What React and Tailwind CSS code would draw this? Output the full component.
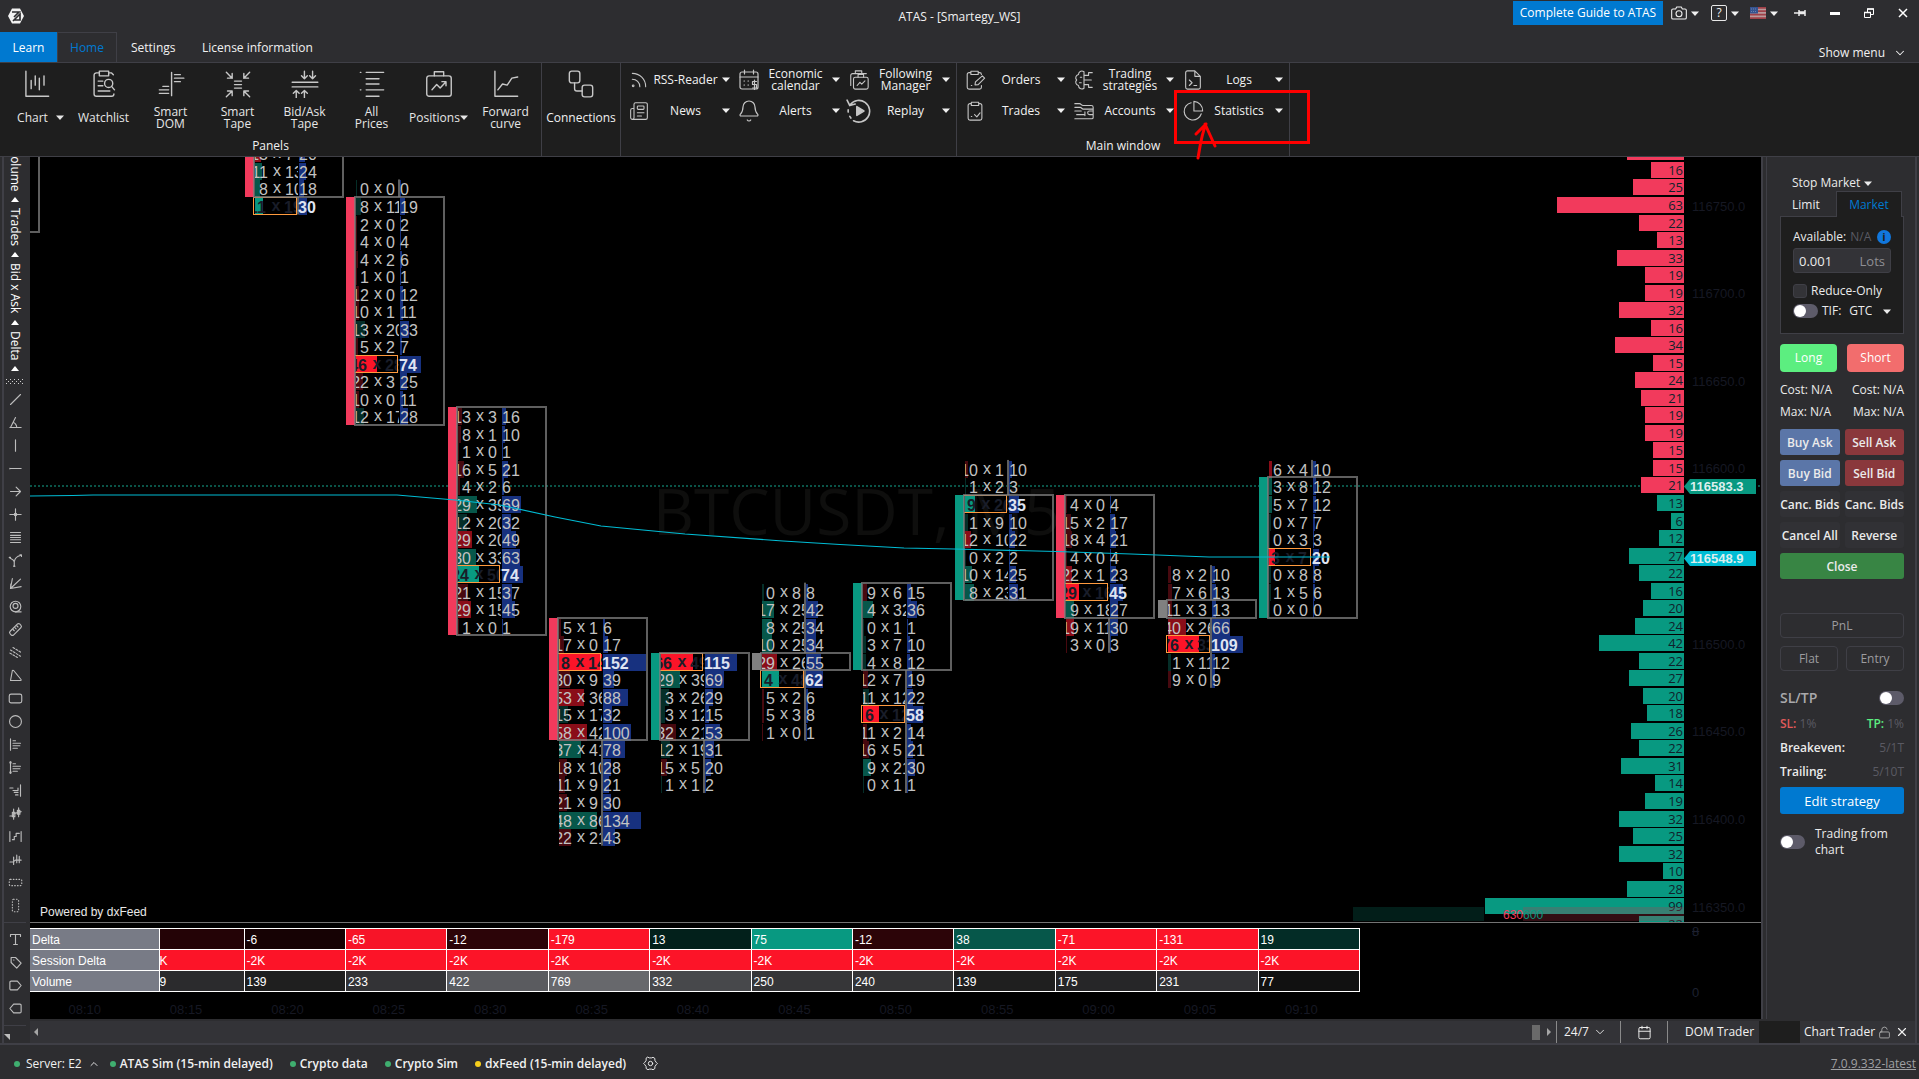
import React, { useState } from 'react';
import { Bell, Calendar, ChevronDown, ChevronUp, LockOpen, Newspaper, Rss, X } from 'lucide-react';

const Svg = ({ size = 24, sw = 1.2, className = '', children }) => (
  <svg width={size} height={size} viewBox="0 0 24 24" fill="none" stroke="currentColor" strokeWidth={sw} strokeLinecap="round" strokeLinejoin="round" className={`shrink-0 ${className}`}>
    {children}
  </svg>
);

const Caret = ({ className = '' }) => (
  <svg width="8" height="5" viewBox="0 0 8 5" fill="currentColor" className={`shrink-0 ${className}`}>
    <path d="M0 0.5H8L4 5Z" />
  </svg>
);

const clip = <path d="M8 4H6.5A2 2 0 0 0 4.500 6V20A2 2 0 0 0 6.500 22H17.500A2 2 0 0 0 19.500 20V6A2 2 0 0 0 17.500 4H16M8 2.500H16V6H8Z" />;

const panelTools = [
  { label: ['Chart'], caret: true, icon: <path d="M2.500 1V22.500H22M7 9V16M10.500 5V13M14 7V17M18 5V13" /> },
  { label: ['Watchlist'], icon: <><path d="M8 2.500H5.500A2 2 0 0 0 3.500 4.500V20.500A2 2 0 0 0 5.500 22.500H18.500A2 2 0 0 0 20.500 20.500M16 2.500H18.500L20 4M8 1H16V5H8ZM7 9.500H11M7 13.500H11M7 18H17" /><circle cx="16" cy="11.500" r="3.500" /><path d="M18.500 14L21 17" /></> },
  { label: ['Smart', 'DOM'], icon: <path d="M12.500 2V22M15 4H20M15 7H23M15 10H20M5 14H10M2 17H10M2 20H10" /> },
  { label: ['Smart', 'Tape'], icon: <path d="M2 2L7 7M7 3V7H3M22 2L17 7M17 3V7H21M2 23L7 18M3 18H7V22M22 23L17 18M21 18H17V22M9 9.500H15M9 12.500H15M9 15.500H15" /> },
  { label: ['Bid/Ask', 'Tape'], icon: <path d="M1 10.500H23M1 14.500H23M11.500 1V7.500M9 5L11.500 7.500L14 5M18.500 1V7.500M16 5L18.500 7.500L21 5M4.500 24V17.500M2 20L4.500 17.500L7 20M11.500 24V17.500M9 20L11.500 17.500L14 20" /> },
  { label: ['All', 'Prices'], icon: <path d="M2 2H2.500M7 2H22M7 7.500H18M7 12H18M2 17H2.500M7 17H22M7 22.500H18" /> },
  { label: ['Positions'], caret: true, tight: true, icon: <><rect x="1.500" y="5" width="21" height="17.500" rx="2" /><path d="M8 5V1.500H16V5M6 17L10 12.500L13 15.500L18 10M14.500 10H18V13.500" /></> },
  { label: ['Forward', 'curve'], icon: <path d="M2.500 1V22.500H22M5 17L9 12L13 13L17 7L22 6" /> },
];

const calendarIcon = <><rect x="3" y="4" width="18" height="17" rx="2" /><path d="M3 9H21M7.500 2V6M16.500 2V6M7 13H7.500M11 13H11.500M7 17H7.500M11 17H11.500" /><path d="M19.500 13.500H15.500V16.500H19.500V20H15.500M17.500 12V21.500" /></>;
const followIcon = <><rect x="6" y="9" width="16" height="13" rx="2" /><path d="M11 9V6H17V9M3 18V7A2 2 0 0 1 5 5H20M8 5V2H15V5M10 18L13 14.500L15 16.500L18.500 13" /></>;
const replayIcon = <><path d="M4 6A10 10 0 1 1 7 21M1 2L3.500 7L8.500 5.500M2 11V13M3.500 17L4.500 18.500" /><path d="M10 8L16.500 12L10 16Z" fill="currentColor" /></>;

const groupA = [
  { label: ['RSS-Reader'], icon: <Rss size={22} strokeWidth={1.3} /> },
  { label: ['Economic', 'calendar'], icon: <Svg size={24}>{calendarIcon}</Svg> },
  { label: ['Following', 'Manager'], icon: <Svg size={22}>{followIcon}</Svg> },
  { label: ['News'], icon: <Newspaper size={24} strokeWidth={1.3} className="-scale-x-100 rotate-180 -scale-y-100" /> },
  { label: ['Alerts'], icon: <Bell size={24} strokeWidth={1.2} className="shrink-0" /> },
  { label: ['Replay'], icon: <Svg size={26} sw={1.5}>{replayIcon}</Svg> },
];

const groupB = [
  { label: ['Orders'], icon: <Svg size={22}><path d="M7.500 4H5.500A2 2 0 0 0 3.500 6V20A2 2 0 0 0 5.500 22H17A2 2 0 0 0 19 20V18M15.500 4H17A2 2 0 0 1 19 6M7.500 2.500H15.500V6H7.500ZM8 18H8.500" /><path d="M12 17.500L12.500 14L20 7.500L22.500 10L15.500 17Z" /></Svg> },
  { label: ['Trading', 'strategies'], icon: <Svg size={22}><path d="M12 3C9 1 6 3 6 6C3 7 2 10 4 12C2 14 3 17 6 18C6 21 9 23 12 21M12 3V21M12 7H17V4H21M12 12H20M12 17H17V20H21M8 9H9.500M7 15H9" /></Svg> },
  { label: ['Logs'], icon: <Svg size={22}><path d="M14 2H6A2 2 0 0 0 4 4V20A2 2 0 0 0 6 22H18A2 2 0 0 0 20 20V8ZM14 2V8H20M8 12L11 15L8 18M13 18H16" /></Svg> },
  { label: ['Trades'], icon: <Svg size={22}>{clip}<path d="M8 18H8.500M11.500 16L14 18.500L17.500 14" /></Svg> },
  { label: ['Accounts'], icon: <Svg size={22}><path d="M2 4H7C9 4 9 6 11 6H20A2 2 0 0 1 22 8V19A1.500 1.500 0 0 1 20.500 20.500H2M2 8H8C9 8 10 10 11 10H22M2 12H9M4 16H12M22 12H18A2 2 0 0 0 18 16H22M13 13V17" /></Svg> },
  { label: ['Statistics'], marked: true, icon: <Svg size={22}><path d="M10 3A9.500 9.500 0 1 0 21 15M13 1.500V12H22.500A10 10 0 0 0 13 1.500Z" /></Svg> },
];

// short vertical strip of drawing tools
const drawTools = [
  ['Line', <path d="M4 20L20 4" />],
  ['Angle', <path d="M3 20H21M4 20L12 4M8 12C11 12 14 16 14 20" />],
  ['Vertical line', <path d="M12 3V21" />],
  ['Horizontal line', <path d="M3 12H21M3 11.500V12.500" />],
  ['Arrow', <path d="M4 12H20M13 5L20 12L13 19" />],
  ['Cross', <><path d="M12 3V21M3 12H21" /><circle cx="12" cy="12" r="2" fill="currentColor" /></>],
  ['Fibonacci', <path d="M4 4H20M4 8.500H20M4 12H20M4 15.500H20M4 20H20" />],
  ['Pitchfork', <><path d="M3 8L8 11L10 14V21M10 14C11 9 14 5 20 4" /><path d="M19 3H21.500V5.500M2 7H4M9 21H11" /></>],
  ['Fan', <path d="M4 20L7 4M4 20L20 5M4 20L21 17M4 20L4.500 13" />],
  ['Spiral', <><circle cx="12" cy="12" r="8.500" /><circle cx="12" cy="11" r="4" /><path d="M12 20.500H21" /></>],
  ['Ruler', <><rect x="8" y="1" width="8" height="22" rx="3" transform="rotate(45 12 12)" /><path d="M8 12L10 14M11 9L13 11M14 6L16 8" /></>],
  ['Channel', <path d="M8 4L21 12M4 8L20 18M3 13L15 20" strokeDasharray="3 2.500" />],
  ['Triangle', <path d="M7 4L4 20H20Q22 20 20.500 18L9 4Q7.500 3 7 4Z" />],
  ['Rectangle', <rect x="2" y="5" width="20" height="14" rx="3" />],
  ['Ellipse', <circle cx="12" cy="12" r="9.500" />],
  ['Profile', <path d="M4 3V21M8 6H12M8 10H20M8 14H19M8 18H15" />],
  ['Anchored profile', <><path d="M4 3V21M8 6H12M8 10H20M8 14H19M8 18H15" /><circle cx="4" cy="4" r="1" /><circle cx="4" cy="20" r="1" /></>],
  ['Right profile', <path d="M20 3V21M3 8H8M8 12H16M10 15H16M12 19H16M16 8V12" />],
  ['Candles', <><path d="M3 16H8L10 12L21 9M9 5V21M17 3V17" /><rect x="7" y="10" width="4" height="7" /><rect x="15" y="7" width="4" height="6" /></>],
  ['Range', <path d="M3 4V20M21 4V20M7 17H10V12H13V7H18" />],
  ['Bars', <path d="M3 16H8L12 13H21M9 8V20M14 5V17M18 7V17" />],
  ['Horizontal range', <rect x="2" y="7" width="20" height="10" rx="2" strokeDasharray="1 3.500" />],
  ['Vertical range', <rect x="7" y="2" width="10" height="20" rx="2" strokeDasharray="1 3.500" />],
];

const noteTools = [
  ['Text', <path d="M4 7V4H20V7M12 4V20M9 20H15" />],
  ['Label', <><path d="M5 4H12L21 13L14 21L5 12Z" /><path d="M9 8H9.500" /></>],
  ['Tag right', <path d="M5 5H15L21 12L15 19H5A2 2 0 0 1 3 17V7A2 2 0 0 1 5 5Z" />],
  ['Tag left', <path d="M19 5H9L3 12L9 19H19A2 2 0 0 0 21 17V7A2 2 0 0 0 19 5Z" />],
];

const PITCH = 17.53;
const STEP = 101.4;
const GREEN = '#089981';
const RED = '#f23a5c';
const rowTop = (r) => 40 + r * PITCH;

const shades = { G: '#089981', g: '#06574a', t: '#052e28', R: '#fc1428', r: '#8a0d18', d: '#47090f' };

// rows: bid, ask, volume, shade; body holds first and last row of the candle
const candles = [
  { from: -3, body: [-12, -1], color: RED, rows: [[13, 7, 20, 'r'], [11, 13, 24, 'g'], [8, 10, 18, 'g'], [11, 19, 30, 'G']] },
  { from: -1, body: [0, 12], color: RED, rows: [[0, 0, 0, 't'], [8, 11, 19, 't'], [2, 0, 2, 'd'], [4, 0, 4, 'd'], [4, 2, 6, 'd'], [1, 0, 1, 'd'], [12, 0, 12, 'd'], [10, 1, 11, 'd'], [13, 20, 33, 't'], [5, 2, 7, 'd'], [46, 28, 74, 'R'], [22, 3, 25, 'd'], [10, 0, 11, 'd'], [12, 17, 28, 't']] },
  { from: 12, body: [12, 24], color: RED, rows: [[13, 3, 16, 'd'], [8, 1, 10, 'd'], [1, 0, 1, 'd'], [16, 5, 21, 'd'], [4, 2, 6, 'd'], [29, 39, 69, 'g'], [12, 20, 32, 't'], [29, 20, 49, 'r'], [30, 33, 63, 'g'], [24, 50, 74, 'G'], [21, 15, 37, 'd'], [29, 15, 45, 'r'], [1, 0, 1, 'd']] },
  { from: 24, body: [24, 30], color: RED, rows: [[5, 1, 6, 'd'], [17, 0, 17, 'd'], [8, 144, 152, 'R'], [30, 9, 39, 'd'], [53, 36, 88, 'r'], [15, 17, 32, 't'], [58, 42, 100, 'r'], [37, 41, 78, 'g'], [18, 10, 28, 'd'], [11, 9, 21, 'd'], [21, 9, 30, 'd'], [48, 86, 134, 'g'], [22, 21, 43, 'd']] },
  { from: 26, body: [26, 30], color: GREEN, rows: [[66, 49, 115, 'R'], [29, 39, 69, 'g'], [3, 26, 29, 't'], [3, 12, 15, 't'], [32, 21, 53, 'd'], [12, 19, 31, 't'], [15, 5, 20, 'd'], [1, 1, 2, 't']] },
  { from: 22, body: [26, 26], color: '#808080', rows: [[0, 8, 8, 't'], [17, 25, 42, 'g'], [8, 25, 34, 'g'], [10, 25, 34, 'g'], [29, 26, 55, 'r'], [4, 48, 62, 'G'], [5, 2, 6, 'd'], [5, 3, 8, 'd'], [1, 0, 1, 'd']] },
  { from: 22, body: [22, 26], color: GREEN, rows: [[9, 6, 15, 'd'], [4, 32, 36, 'g'], [0, 1, 1, 't'], [3, 7, 10, 't'], [4, 8, 12, 't'], [12, 7, 19, 'd'], [11, 12, 22, 't'], [6, 12, 58, 'R'], [11, 2, 14, 'd'], [16, 5, 21, 'd'], [9, 21, 30, 'g'], [0, 1, 1, 't']] },
  { from: 15, body: [17, 22], color: GREEN, rows: [[10, 1, 10, 'd'], [1, 2, 3, 't'], [9, 26, 35, 'G'], [1, 9, 10, 't'], [12, 10, 22, 'r'], [0, 2, 2, 't'], [10, 14, 25, 'g'], [8, 23, 31, 'g']] },
  { from: 17, body: [17, 23], color: RED, rows: [[4, 0, 4, 'd'], [15, 2, 17, 'd'], [18, 4, 21, 'd'], [4, 0, 4, 'd'], [22, 1, 23, 'r'], [29, 16, 45, 'R'], [9, 18, 27, 'g'], [19, 11, 30, 'r'], [3, 0, 3, 'd']] },
  { from: 21, body: [23, 23], color: '#808080', rows: [[8, 2, 10, 'd'], [7, 6, 13, 'd'], [11, 3, 13, 'd'], [40, 26, 66, 'r'], [76, 33, 109, 'R'], [1, 11, 12, 't'], [9, 0, 9, 'd']] },
  { from: 15, body: [16, 23], color: GREEN, rows: [[6, 4, 10, 'r'], [3, 8, 12, 'g'], [5, 7, 12, 'g'], [0, 7, 7, 't'], [0, 3, 3, 't'], [3, 7, 20, 'R'], [0, 8, 8, 't'], [1, 5, 6, 't'], [0, 0, 0, 't']] },
];

const profile = [28, 16, 25, 63, 22, 13, 33, 19, 19, 32, 16, 34, 15, 24, 21, 19, 19, 15, 15, 21, 13, 6, 12, 27, 22, 16, 20, 24, 42, 22, 27, 20, 18, 26, 22, 31, 14, 19, 32, 25, 32, 10, 28, 99, 22];
const FIRST_ROW = -3;
const LAST_RED = 16;

const Candle = ({ candle, index }) => {
  const x = Math.round(225 + index * STEP);
  const [b0, b1] = candle.body;
  const last = candle.from + candle.rows.length - 1;
  const top = Math.round(rowTop(b0));
  const bottom = Math.round(rowTop(b1 + 1));
  return (
    <g fontFamily="Liberation Sans, Arial, sans-serif" fontSize="16">
      {candle.rows.map(([bid, ask, vol, shade], i) => {
        const y = Math.round(rowTop(candle.from + i));
        const poc = shade === 'G' || shade === 'R';
        const w = Math.max(1, Math.round(vol * 0.28));
        const dark = poc ? '#191d29' : '#c3c3c3';
        const off = poc ? 2 : 0;
        return (
          <g key={i}>
            <rect x={x} y={y + 1} width={w} height="17" fill={shades[shade]} />
            <rect x={x + 44} y={y + 1} width={w} height="17" fill="#17317f" />
            <svg x={x} y={y} width="43" height="20" overflow="hidden" fill={dark} fontWeight={poc ? 700 : 400}>
              <text x={13 - off} y="16" textAnchor="end">{bid}</text>
              <text x={22 - off / 2} y="14" textAnchor="middle">x</text>
              <text x={30 - off / 2} y="16">{ask}</text>
            </svg>
            {poc && <rect x={x - 1.5} y={y + 0.5} width="43" height="17" fill="none" stroke="#ff9a3e" />}
          </g>
        );
      })}
      {candle.from < b0 && <rect x={x + 42} y={rowTop(candle.from)} width="2" height={top - rowTop(candle.from)} fill="#5f5f5f" />}
      {last > b1 && <rect x={x + 42} y={bottom} width="2" height={rowTop(last + 1) - bottom} fill="#5f5f5f" />}
      <rect x={x - 10} y={top} width="9" height={bottom - top} fill={candle.color} />
      <rect x={x - 1} y={top} width="89" height={bottom - top} fill="none" stroke="#7f7f7f" strokeOpacity="0.75" strokeWidth="2" />
      {candle.rows.map(([, , vol, shade], i) => {
        const poc = shade === 'G' || shade === 'R';
        return (
          <text key={i} x={x + (poc ? 43 : 44)} y={Math.round(rowTop(candle.from + i)) + 16} fill={poc ? '#dfe4f2' : '#c3c3c3'} fontWeight={poc ? 700 : 400}>{vol}</text>
        );
      })}
    </g>
  );
};

const PriceTag = ({ y, color, text }) => (
  <g transform={`translate(0 ${y})`}>
    <path d="M0 0L6 -7.500H72V7.500H6Z" fill={color} />
    <text x="6" y="4" fontSize="13" fontWeight="700" fill="#dcefee">{text}</text>
  </g>
);

const PriceChart = () => (
  <svg className="block h-full w-full bg-black">
    <svg x="-39" width="100%" overflow="visible">
      <text x="50%" y="378" textAnchor="middle" fontSize="64" fill="#0e0e0d" fontFamily="Open Sans, Noto Sans, sans-serif">BTCUSDT, M5</text>
    </svg>
    <path d="M0 75H9V-2" fill="none" stroke="#5f5f5f" strokeWidth="2" />
    <line x1="0" x2="100%" y1="329" y2="329" stroke="#0a5448" strokeWidth="2" strokeDasharray="2 2" />
    {candles.map((c, i) => <Candle key={i} candle={c} index={i} />)}
    <polyline points="0,339 43,338.500 63,338 367,338 425,343 470,348 525,360 571,369 655,377 753,384 810,387.500 874,391 924,392 1026,394.500 1101,397 1179,400 1300,400" fill="none" stroke="#00bcd4" strokeWidth="1.200" />
    <text x="10" y="759" fill="#e8e8e8" fontSize="12" fontFamily="Liberation Sans, sans-serif">Powered by dxFeed</text>
    <svg x="100%" overflow="visible">
      <g transform="translate(-77 0)">
        <rect x="-331" y="750" width="131" height="14" fill="#021e19" />
        {profile.map((n, i) => {
          const r = FIRST_ROW + i;
          const y = Math.round(rowTop(r));
          const w = n * 2 + 1;
          return (
            <g key={i}>
              <rect x={-w} y={y} width={w} height="16" fill={r <= LAST_RED ? RED : GREEN} />
              <text x="-1" y={y + 13} textAnchor="end" fontSize="13" fill="#10222c" fontFamily="Open Sans, Noto Sans, sans-serif">{n}</text>
            </g>
          );
        })}
        <rect x="-161" y="750" width="161" height="14" fill="#c8324a" fillOpacity="0.25" />
        <text x="-181" y="762" fontSize="12" fill="#f23a5c" fontFamily="Liberation Sans, sans-serif">630<tspan fill={GREEN}>600</tspan></text>
        <g fontFamily="Liberation Sans, sans-serif">
          {[750, 700, 650, 600, 500, 450, 400, 350].map((p) => (
            <text key={p} x="8" y={Math.round(48.5 + ((750 - p) / 10) * PITCH) + 5} fontSize="13" fill="#161823">{`116${p}.0`}</text>
          ))}
          <PriceTag y={329.5} color={GREEN} text="116583.3" />
          <PriceTag y={401.5} color="#00bcd4" text="116548.9" />
        </g>
      </g>
    </svg>
  </svg>
);

const stats = [
  { delta: '', session: 'K', volume: '9', dc: '#240306', vc: '#2b2b2d' },
  { delta: '-6', session: '-2K', volume: '139', dc: '#160204', vc: '#1f1f1f' },
  { delta: '-65', session: '-2K', volume: '233', dc: '#f71428', vc: '#333336' },
  { delta: '-12', session: '-2K', volume: '422', dc: '#2c0408', vc: '#5a5b5f' },
  { delta: '-179', session: '-2K', volume: '769', dc: '#fc1428', vc: '#67686c' },
  { delta: '13', session: '-2K', volume: '332', dc: '#02201b', vc: '#47484b' },
  { delta: '75', session: '-2K', volume: '250', dc: '#089981', vc: '#363638' },
  { delta: '-12', session: '-2K', volume: '240', dc: '#2c0408', vc: '#343436' },
  { delta: '38', session: '-2K', volume: '139', dc: '#06574a', vc: '#1f1f1f' },
  { delta: '-71', session: '-2K', volume: '175', dc: '#fc1428', vc: '#262628' },
  { delta: '-131', session: '-2K', volume: '231', dc: '#fc1428', vc: '#323235' },
  { delta: '19', session: '-2K', volume: '77', dc: '#032c26', vc: '#111111' },
];

const times = ['08:10', '08:15', '08:20', '08:25', '08:30', '08:35', '08:40', '08:45', '08:50', '08:55', '09:00', '09:05', '09:10'];

const statRows = [
  { name: 'Delta', key: 'delta', color: (s) => s.dc },
  { name: 'Session Delta', key: 'session', color: () => '#fc1428' },
  { name: 'Volume', key: 'volume', color: (s) => s.vc },
];

const StatsTable = () => (
  <table className="w-[1330px] table-fixed border-collapse text-left text-[12px] leading-4 text-white">
    <colgroup>
      <col className="w-[129px]" />
      <col className="w-[85px]" />
    </colgroup>
    <tbody>
      {statRows.map((row) => (
        <tr key={row.name} className="h-[21px]">
          <th scope="row" className="border-y border-white bg-[#787b86] px-[2px] pt-px font-normal">{row.name}</th>
          {stats.map((s, i) => (
            <td key={i} className={`border border-white pt-px ${i ? 'px-[2px]' : ''}`} style={{ backgroundColor: row.color(s) }}>{s[row.key]}</td>
          ))}
        </tr>
      ))}
    </tbody>
  </table>
);

const Toggle = ({ id, label }) => {
  const [on, setOn] = useState(false);
  return (
    <span className="relative inline-flex h-[14px] w-[25px] shrink-0">
      <input id={id} type="checkbox" role="switch" aria-label={label} checked={on} onChange={() => setOn(!on)} className="peer h-full w-full cursor-pointer appearance-none rounded-full bg-[#5d5b69] checked:bg-[#0079d0]" />
      <span className="pointer-events-none absolute top-px left-px h-3 w-3 rounded-full bg-white peer-checked:left-3" />
    </span>
  );
};

const TitleBar = () => (
  <header className="relative flex h-8 shrink-0 items-start justify-between text-[12px]">
    <svg width="16" height="16" viewBox="0 0 16 16" className="mt-2 ml-2">
      <path d="M4 0.500H12L16 8L12 15.500H4L0 8Z" fill="#f2f2f2" />
      <path d="M4 4H11L6 9M5.500 12H12V6L5 13" fill="none" stroke="#2d2d30" strokeWidth="1.700" />
    </svg>
    <h1 className="absolute inset-x-0 top-2 text-center leading-[18px]">ATAS - [Smartegy_WS]</h1>
    <div className="relative flex h-[26px] items-center pr-[11px]">
      <a href="#guide" className="mr-2 flex h-6 w-[150px] items-center justify-center bg-[#0079d0] text-[12px] text-white">Complete Guide to ATAS</a>
      <button type="button" aria-label="Screenshot" className="mr-3 flex items-center gap-1">
        <Svg size={16} sw={1.6}><path d="M3 6H7L8.500 3H15.500L17 6H21A2 2 0 0 1 23 8V19A2 2 0 0 1 21 21H3A2 2 0 0 1 1 19V8A2 2 0 0 1 3 6Z" /><circle cx="12" cy="13" r="4.500" /></Svg>
        <Caret />
      </button>
      <button type="button" aria-label="Help" className="mr-[11px] flex items-center gap-1">
        <span className="flex h-4 w-4 items-center justify-center rounded-[2px] border border-[#e8e8e8] text-[12px] leading-3">?</span>
        <Caret />
      </button>
      <button type="button" aria-label="Language" className="mr-4 flex items-center gap-1">
        <svg width="16" height="12" viewBox="0 0 16 12">
          <rect width="16" height="12" fill="#b9999b" />
          <path d="M0 0.800H16M0 4.200H16M0 7.600H16M0 11.200H16" stroke="#a04048" strokeWidth="1.700" />
          <rect width="8" height="6.500" fill="#35538f" />
          <path d="M1 2H7M1 4.500H7" stroke="#7c8fb8" strokeWidth="0.800" strokeDasharray="1 1" />
        </svg>
        <Caret />
      </button>
      <button type="button" aria-label="Pin" className="mr-6">
        <svg width="12" height="8" viewBox="0 0 12 8" stroke="#ececec" fill="none" strokeWidth="1.500"><path d="M0 4H5M5 1V7M5 4.500H11M11 1V7M5 3H11" /></svg>
      </button>
      <button type="button" aria-label="Minimize" className="mr-6 h-[3px] w-[10px] bg-white" />
      <button type="button" aria-label="Restore" className="mr-6">
        <svg width="10" height="10" viewBox="0 0 10 10" stroke="#fff" fill="none"><path d="M0.500 4.500H6.500V9.500H0.500ZM3.500 4V1H9.500V6.500H7" /><path d="M0 4.500H7M3 1H10" strokeWidth="1.600" /></svg>
      </button>
      <button type="button" aria-label="Close"><svg width="10" height="10" viewBox="0 0 10 10" stroke="#fff" strokeWidth="1.500"><path d="M1 1L9 9M9 1L1 9" /></svg></button>
    </div>
  </header>
);

const MenuTabs = () => (
  <nav className="flex h-[30px] shrink-0 items-stretch text-[12px]">
    <button type="button" className="w-[57px] bg-[#0079d0] pt-px text-white">Learn</button>
    <button type="button" className="w-[60px] border border-b-0 border-[#3f3f46] text-[#0079d0]">Home</button>
    <button type="button" className="ml-[14px] w-[43px] pt-px whitespace-nowrap">Settings</button>
    <button type="button" className="ml-7 pt-px whitespace-nowrap">License information</button>
    <button type="button" className="mr-3 ml-auto flex items-center gap-2 pt-3">
      Show menu
      <ChevronDown size={14} strokeWidth={1.8} />
    </button>
  </nav>
);

const SmallTools = ({ items, cols }) => (
  <div className={`grid auto-rows-[31px] ${cols}`}>
    {items.map((item) => (
      <div key={item.label[0]} className="relative flex">
        <button type="button" className="flex flex-1 items-center pr-[6px] pl-[3px]">
          <span className="flex w-5 shrink-0 justify-center text-[#c6c6c6]">{item.icon}</span>
          <span className="flex-1 text-center text-[12px] leading-3">
            {item.label.map((l) => <span key={l} className="block whitespace-nowrap">{l}</span>)}
          </span>
          <Caret />
        </button>
        {item.marked && (
          <svg className="pointer-events-none absolute -top-[6px] -left-[6px] z-10" width="138" height="74" fill="none" stroke="#ff0000" strokeWidth="3">
            <rect x="1.500" y="2.500" width="133" height="51" />
            <path d="M24 69C26 58 27 47 32 35L22 45M31 35L41 57" strokeLinecap="round" strokeLinejoin="round" strokeWidth="3" />
          </svg>
        )}
      </div>
    ))}
  </div>
);

const Ribbon = () => (
  <section className="flex h-[95px] shrink-0 border-y border-[#3f3f46] bg-[#1e1e1e] text-[12px]">
    <div className="relative flex w-[542px] shrink-0 border-r border-[#3f3f46] pl-[3px]">
      {panelTools.map((t) => (
        <button type="button" key={t.label[0]} className="flex h-[74px] w-[67px] flex-col items-center pt-[7px] text-[#e6e6e6]">
          <Svg size={28} className="text-[#c8c8c8]">{t.icon}</Svg>
          <span className={`flex h-10 items-center justify-center leading-3 ${t.caret && !t.tight ? 'pl-2' : ''}`}>
            <span>{t.label.map((l) => <span key={l} className="block">{l}</span>)}</span>
            {t.caret && <Caret className={t.tight ? '' : 'ml-2'} />}
          </span>
        </button>
      ))}
      <p className="absolute inset-x-0 bottom-px text-center leading-[18px]">Panels</p>
    </div>
    <div className="w-[79px] shrink-0 border-r border-[#3f3f46]">
      <button type="button" className="flex w-full flex-col items-center pt-[7px]">
        <Svg size={28} className="text-[#c8c8c8]"><rect x="2" y="1" width="9" height="10" rx="2" /><rect x="13" y="13" width="9" height="10" rx="2" /><path d="M6.500 11V16A2 2 0 0 0 8.500 18H13" /></Svg>
        <span className="flex h-10 items-center">Connections</span>
      </button>
    </div>
    <div className="w-[336px] shrink-0 border-r border-[#3f3f46] pt-px pl-[5px]">
      <SmallTools items={groupA} cols="grid-cols-[110px_110px_110px]" />
    </div>
    <div className="relative w-[333px] shrink-0 border-r border-[#3f3f46] pt-px pl-[5px]">
      <SmallTools items={groupB} cols="grid-cols-[109px_109px_109px]" />
      <p className="absolute inset-x-0 bottom-px text-center leading-[18px]">Main window</p>
    </div>
  </section>
);

const ToolStrip = ({ tools }) => tools.map(([name, icon]) => (
  <button type="button" key={name} aria-label={name} className="flex h-[23px] w-full shrink-0 items-center justify-center text-[#bdbdbd]">
    <Svg size={15} sw={1.8}>{icon}</Svg>
  </button>
));

const LeftToolbar = () => (
  <aside className="flex w-[26px] shrink-0 flex-col items-center pr-1">
    <div className="flex h-[220px] w-full shrink-0 flex-col items-center justify-end overflow-hidden text-[12px] leading-4 text-white">
      {['Volume', 'Trades', 'Bid x Ask', 'Delta'].map((l) => (
        <button type="button" key={l} className="flex shrink-0 flex-col items-center gap-[6px] pb-[6px]">
          <span className="whitespace-nowrap [writing-mode:vertical-rl]">{l}</span>
          <svg width="8" height="5" viewBox="0 0 8 5" fill="currentColor"><path d="M0 5H8L4 0Z" /></svg>
        </button>
      ))}
    </div>
    <svg width="18" height="6" className="my-[2px] shrink-0" stroke="#d0d0d0" strokeDasharray="1 3"><path d="M0 0.500H18M2 2.500H18M0 4.500H18" /></svg>
    <div className="flex w-full flex-col pt-px"><ToolStrip tools={drawTools} /></div>
    <div className="mt-[5px] flex w-full flex-col border-y border-[#3f3f46] py-[5px]"><ToolStrip tools={noteTools} /></div>
    <svg width="6" height="6" className="mt-2 mr-auto" fill="#bdbdbd"><path d="M0 0H6V6Z" /></svg>
  </aside>
);

const small = 'h-[26px] rounded-[3px] pt-px text-[12px] font-semibold whitespace-nowrap';

const TradePanel = () => (
  <aside className="w-[149px] shrink-0 border-l border-[#3f3f46] pt-[18px] pr-[11px] pl-[13px] text-[12px] leading-4 text-[#ebebeb]">
    <label className="flex items-center gap-[3px] pl-3">
      <select aria-label="Order type" className="appearance-none bg-transparent"><option>Stop Market</option></select>
      <Caret />
    </label>
    <div className="flex items-stretch">
      <button type="button" className="w-14 pt-[2px] pl-3 text-left">Limit</button>
      <button type="button" className="relative z-10 -mb-px h-[26px] w-[66px] border border-b-0 border-[#3f3f46] bg-[#1e1e1e] text-[#0079d0]">Market</button>
    </div>
    <div className="flex flex-col border border-[#3f3f46] bg-[#1e1e1e] px-3 pt-3 pb-[14px]">
      <div className="flex items-center">
        Available:<span className="ml-1 text-[#5a5a63]">N/A</span>
        <span className="ml-auto flex h-[14px] w-[14px] items-center justify-center rounded-full bg-[#1177dd] text-[11px] font-bold text-[#1e1e1e]">i</span>
      </div>
      <label className="mt-[3px] flex h-[25px] items-center rounded-[3px] border border-[#3f3f46] bg-[#333337] px-[5px] text-[13px]">
        <input defaultValue="0.001" className="w-0 flex-1 bg-transparent outline-none" />
        <span className="text-[#8f8f94]">Lots</span>
      </label>
      <label className="mt-[10px] flex items-center gap-1 text-[12px] whitespace-nowrap">
        <input type="checkbox" className="h-[14px] w-[14px] shrink-0 appearance-none rounded-[3px] border border-[#3f3f46] bg-[#333337] checked:bg-[#0079d0]" />
        Reduce-Only
      </label>
      <div className="mt-1 flex items-center gap-1">
        <Toggle id="tif" label="TIF" />
        <label htmlFor="tif">TIF:</label>
        <select aria-label="Time in force" className="ml-1 appearance-none bg-transparent"><option>GTC</option></select>
        <Caret className="ml-auto" />
      </div>
    </div>
    <div className="mt-[10px] grid grid-cols-2 gap-[10px]">
      <button type="button" className="h-7 rounded-[4px] bg-[#5cee80] text-[12px] text-white">Long</button>
      <button type="button" className="h-7 rounded-[4px] bg-[#f26d6d] text-[12px] text-white">Short</button>
    </div>
    <div className="mt-[10px] grid grid-cols-2 gap-y-[6px]">
      <span>Cost: N/A</span>
      <span className="text-right">Cost: N/A</span>
      <span>Max: N/A</span>
      <span className="text-right">Max: N/A</span>
    </div>
    <div className="mt-[9px] grid grid-cols-2 gap-[5px]">
      <button type="button" className={`${small} bg-[#5b76a8]`}>Buy Ask</button>
      <button type="button" className={`${small} bg-[#8a383c]`}>Sell Ask</button>
      <button type="button" className={`${small} bg-[#5b76a8]`}>Buy Bid</button>
      <button type="button" className={`${small} bg-[#8a383c]`}>Sell Bid</button>
      <button type="button" className={`${small} bg-[#313135]`}>Canc. Bids</button>
      <button type="button" className={`${small} bg-[#313135]`}>Canc. Bids</button>
      <button type="button" className={`${small} bg-[#313135]`}>Cancel All</button>
      <button type="button" className={`${small} bg-[#313135]`}>Reverse</button>
      <button type="button" className={`${small} col-span-2 bg-[#388544]`}>Close</button>
    </div>
    <div className="mt-[34px] grid grid-cols-2 gap-2 text-[#9c9c9f]">
      <button type="button" className="col-span-2 h-[25px] rounded-[4px] border border-[#3f3f46]">PnL</button>
      <button type="button" className="h-[25px] rounded-[4px] border border-[#3f3f46]">Flat</button>
      <button type="button" className="h-[25px] rounded-[4px] border border-[#3f3f46]">Entry</button>
    </div>
    <div className="mt-[19px] flex items-center justify-between text-[14px] font-semibold text-[#a9a9ac]">
      <label htmlFor="sltp">SL/TP</label>
      <Toggle id="sltp" label="SL/TP" />
    </div>
    <div className="mt-[10px] flex flex-col gap-2 text-[#5a5a63]">
      <div className="flex justify-between"><span><b className="font-semibold text-[#e05a5a]">SL:</b> 1%</span><span><b className="font-semibold text-[#5cee80]">TP:</b> 1%</span></div>
      <div className="flex justify-between"><b className="font-semibold text-[#ebebeb]">Breakeven:</b>5/1T</div>
      <div className="flex justify-between"><b className="font-semibold text-[#ebebeb]">Trailing:</b>5/10T</div>
    </div>
    <button type="button" className="mt-[7px] h-[27px] w-full rounded-[3px] bg-[#0079d0] text-[13px] text-white">Edit strategy</button>
    <div className="mt-3 flex items-center gap-[10px]">
      <Toggle id="tradechart" label="Trading from chart" />
      <label htmlFor="tradechart">Trading from chart</label>
    </div>
  </aside>
);

const BottomBar = () => (
  <div className="mt-[2px] flex h-[22px] shrink-0 items-stretch bg-[#333337] text-[12px] leading-4">
    <div className="flex flex-1 items-center justify-between pr-[5px] pl-1 text-[#a5a5a5]">
      <button type="button" aria-label="Scroll left"><svg width="4" height="8" fill="currentColor"><path d="M4 0V8L0 4Z" /></svg></button>
      <div className="flex items-center gap-[7px]">
        <span className="h-[15px] w-2 bg-[#6a6a6a]" />
        <button type="button" aria-label="Scroll right"><svg width="4" height="8" fill="currentColor"><path d="M0 0V8L4 4Z" /></svg></button>
      </div>
    </div>
    <label className="flex w-16 items-center gap-1 border-l border-[#8a8a8a] pl-[7px]">
      <select aria-label="Session" className="appearance-none bg-transparent"><option>24/7</option></select>
      <ChevronDown size={14} strokeWidth={1.5} />
    </label>
    <button type="button" aria-label="Calendar" className="flex w-12 items-center justify-center border-x border-[#8a8a8a]"><Calendar size={15} strokeWidth={1.5} /></button>
    <button type="button" className="w-[91px] pl-3 whitespace-nowrap">DOM Trader</button>
    <span className="w-[41px] bg-[#1e1e1e]" />
    <div className="flex w-[115px] items-center pl-1">
      <button type="button" className="whitespace-nowrap">Chart Trader</button>
      <LockOpen size={13} strokeWidth={1.6} className="mr-1 ml-auto text-[#b0b0b0]" />
      <button type="button" aria-label="Close panel" className="mr-[6px]"><X size={14} strokeWidth={2} /></button>
    </div>
  </div>
);

const feeds = [
  ['ATAS Sim (15-min delayed)', 'bg-[#3fae6f]'],
  ['Crypto data', 'bg-[#3fae6f]'],
  ['Crypto Sim', 'bg-[#3fae6f]'],
  ['dxFeed (15-min delayed)', 'bg-[#f6ce1c]'],
];

const StatusBar = () => (
  <footer className="flex h-9 shrink-0 items-center border-t-2 border-[#3f3f46] pt-[3px] pr-[3px] pl-[14px] text-[12px]">
    <span className="mr-[6px] h-[6px] w-[6px] rounded-full bg-[#3fae6f]" />
    <button type="button" className="mr-[10px] flex items-center gap-[6px] font-medium">
      Server: E2 <ChevronUp size={12} strokeWidth={1.8} />
    </button>
    {feeds.map(([name, dot]) => (
      <span key={name} className="mr-[17px] flex items-center gap-1 font-semibold whitespace-nowrap">
        <span className={`h-[6px] w-[6px] rounded-full ${dot}`} />
        {name}
      </span>
    ))}
    <button type="button" aria-label="Settings">
      <Svg size={15} sw={1.5}><path d="M8 2L10 3H14L16 2L19 4V7L21 10L23 12L21 14L19 17V20L16 22L14 21H10L8 22L5 20V17L3 14L1 12L3 10L5 7V4Z" /><circle cx="12" cy="12" r="3.500" /></Svg>
    </button>
    <a href="#version" className="ml-auto text-[#a0a0a3] underline">7.0.9.332-latest</a>
  </footer>
);

export default function App() {
  return (
    <div className="flex h-screen flex-col overflow-hidden bg-[#2d2d30] font-['Open_Sans','Noto_Sans',sans-serif] text-[#f1f1f1]">
      <TitleBar />
      <MenuTabs />
      <Ribbon />
      <main className="mx-[2px] flex min-h-0 flex-1 border-x-2 border-[#3f3f46]">
        <LeftToolbar />
        <div className="flex min-w-0 flex-1 flex-col">
          <div className="flex min-h-0 flex-1">
            <section className="flex min-w-0 flex-1 flex-col overflow-hidden bg-black font-['Liberation_Sans',Arial,sans-serif]">
              <div className="min-h-0 flex-1"><PriceChart /></div>
              <div className="flex h-[97px] shrink-0 border-t border-[#737373] pt-[5px]">
                <div className="min-w-0 flex-1">
                  <StatsTable />
                  <div className="mt-2 ml-1 flex w-[1318px] text-[13px] leading-5 text-[#161823]">
                    {times.map((t) => <span key={t} className="flex-1 text-center">{t}</span>)}
                  </div>
                </div>
                <div className="flex w-[77px] flex-col justify-between pb-[18px] pl-2 text-[13px] leading-4 text-[#1d2030]">
                  <span className="-mt-1 line-through">8</span>
                  <span>0</span>
                </div>
              </div>
            </section>
            <div className="w-[5px] shrink-0 border-l-2 border-[#3f3f46]" />
            <TradePanel />
          </div>
          <BottomBar />
        </div>
      </main>
      <StatusBar />
    </div>
  );
}
